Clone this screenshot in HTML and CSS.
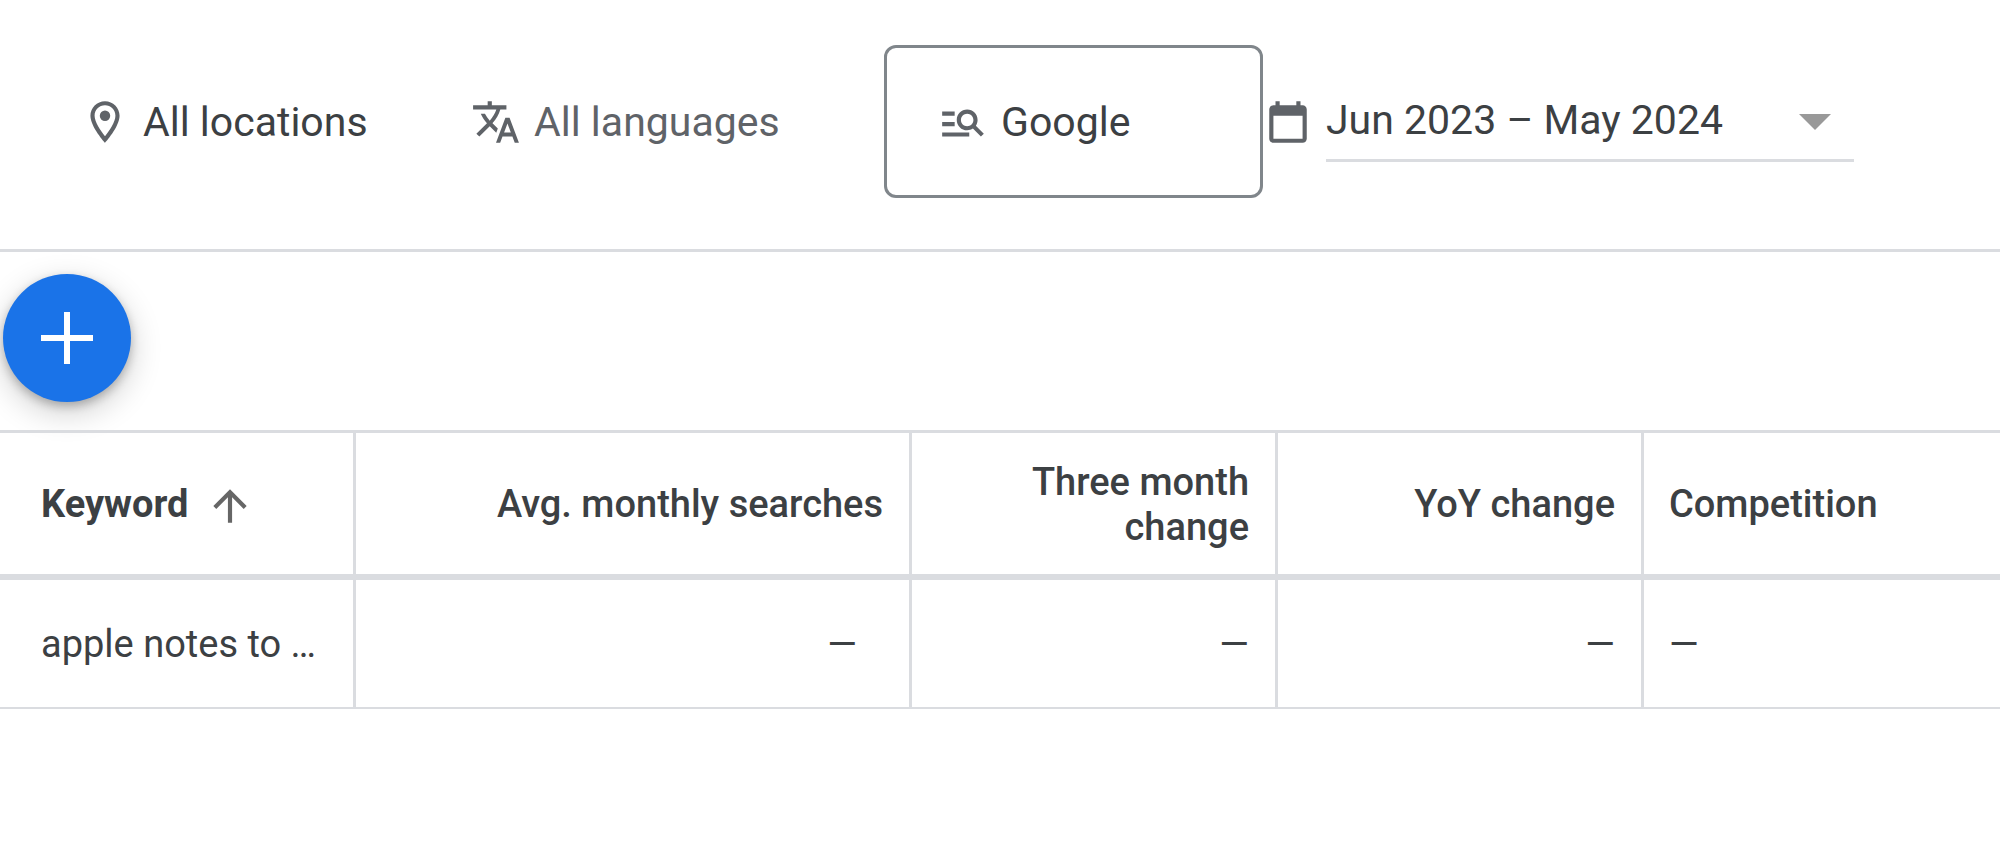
FILE: index.html
```html
<!DOCTYPE html>
<html lang="en">
<head>
    <meta charset="UTF-8">
    <meta name="viewport" content="width=device-width, initial-scale=1.0">
    <title>Keyword Planner</title>
    <link rel="stylesheet" href="styles.css">
</head>
<body>
    <header class="toolbar">
        <button class="filter locations">
            <svg class="icon" viewBox="0 0 24 24"><path d="M12 2C8.13 2 5 5.13 5 9c0 5.25 7 13 7 13s7-7.75 7-13c0-3.87-3.13-7-7-7zM7 9c0-2.76 2.24-5 5-5s5 2.24 5 5c0 2.88-2.88 7.19-5 9.88C9.92 16.21 7 11.85 7 9z"/><circle cx="12" cy="9" r="2.5"/></svg>
            <span>All locations</span>
        </button>
        <button class="filter languages">
            <svg class="icon" viewBox="0 0 24 24"><path d="M12.87 15.07l-2.54-2.51.03-.03c1.74-1.94 2.98-4.17 3.71-6.53H17V4h-7V2H8v2H1v1.99h11.17C11.5 7.92 10.44 9.75 9 11.35 8.07 10.32 7.3 9.19 6.69 8h-2c.73 1.63 1.73 3.17 2.98 4.56l-5.09 5.02L4 19l5-5 3.11 3.11.76-2.04zM18.5 10h-2L12 22h2l1.12-3h4.75L21 22h2l-4.5-12zm-2.62 7l1.62-4.33L19.12 17h-3.24z"/></svg>
            <span>All languages</span>
        </button>
        <button class="filter network">
            <svg class="icon" viewBox="0 0 24 24"><path d="M8 9H2V7h6v2zm0 3H2v2h6v-2zm12.59 7l-3.83-3.83c-.8.52-1.74.83-2.76.83-2.76 0-5-2.24-5-5s2.24-5 5-5 5 2.24 5 5c0 1.02-.31 1.96-.83 2.75L22 17.59 20.59 19zM17 11c0-1.65-1.35-3-3-3s-3 1.35-3 3 1.35 3 3 3 3-1.35 3-3zM2 19h13v-2H2v2z"/></svg>
            <span>Google</span>
        </button>
        <div class="date-range">
            <svg class="icon" viewBox="0 0 24 24"><path d="M19 4h-1V2h-2v2H8V2H6v2H5c-1.11 0-1.99.9-1.99 2L3 20c0 1.1.89 2 2 2h14c1.1 0 2-.9 2-2V6c0-1.1-.9-2-2-2zm0 16H5V9h14v11z"/></svg>
            <div class="date-field">
                <select aria-label="Date range">
                    <option>Jun 2023 – May 2024</option>
                </select>
                <svg class="caret" viewBox="0 0 32 16"><path d="M0 0h32L16 16z"/></svg>
            </div>
        </div>
    </header>

    <main>
        <div class="actions">
            <button class="add-button" aria-label="Add keywords">
                <svg viewBox="0 0 52 52"><path d="M23 0h6v23h23v6H29v23h-6V29H0v-6h23z"/></svg>
            </button>
        </div>

        <table class="keywords">
            <thead>
                <tr>
                    <th class="keyword">
                        <div class="sort">
                            <span>Keyword</span>
                            <svg class="icon" viewBox="0 0 24 24"><path d="M4 12l1.41 1.41L11 7.83V20h2V7.83l5.58 5.59L20 12l-8-8-8 8z"/></svg>
                        </div>
                    </th>
                    <th class="searches">Avg. monthly searches</th>
                    <th class="change">Three month change</th>
                    <th class="change">YoY change</th>
                    <th class="competition">Competition</th>
                </tr>
            </thead>
            <tbody>
                <tr>
                    <td class="keyword">apple notes to …</td>
                    <td class="searches">—</td>
                    <td class="change">—</td>
                    <td class="change">—</td>
                    <td class="competition">—</td>
                </tr>
            </tbody>
        </table>
    </main>
</body>
</html>
```
FILE: styles.css
```css
* {
    box-sizing: border-box;
}

body {
    font-family: Roboto, Arial, sans-serif;
    margin: 0;
    background-color: #fff;
    color: #3c4043;
}

button,
select {
    font-family: inherit;
    color: inherit;
    background: none;
    border: none;
    cursor: pointer;
}

.icon {
    width: 50px;
    height: 50px;
    flex: none;
    fill: #5f6368;
}

.toolbar {
    display: flex;
    align-items: center;
    padding: 45px 26px 51px;
    border-bottom: 3px solid #dadce0;
}

.filter {
    display: flex;
    align-items: center;
    gap: 13px;
    height: 153px;
    padding: 0 51px;
    border: 3px solid transparent;
    border-radius: 12px;
    font-size: 41px;
    white-space: nowrap;
}

.locations {
    width: 391px;
}

.languages {
    width: 467px;
    color: #5f6368;
}

.network {
    width: 379px;
    border-color: #80868b;
}

.date-range {
    display: flex;
    align-items: center;
    gap: 13px;
}

.date-field {
    position: relative;
    width: 528px;
    border-bottom: 3px solid #dadce0;
}

.date-field select {
    display: block;
    width: 100%;
    height: 78px;
    padding: 0;
    appearance: none;
    font-size: 41px;
}

.caret {
    position: absolute;
    right: 23px;
    top: 33px;
    width: 32px;
    height: 16px;
    fill: #999;
    pointer-events: none;
}

.actions {
    height: 178px;
    padding: 22px 3px;
}

.add-button {
    display: flex;
    align-items: center;
    justify-content: center;
    width: 128px;
    height: 128px;
    padding: 0;
    border-radius: 50%;
    background-color: #1a73e8;
    box-shadow: 0 4px 10px rgba(0, 0, 0, 0.24), 0 10px 32px rgba(0, 0, 0, 0.2);
}

.add-button svg {
    width: 52px;
    height: 52px;
    fill: #fff;
}

.keywords {
    width: 100%;
    table-layout: fixed;
    border-collapse: separate;
    border-spacing: 0;
    border-top: 3px solid #dadce0;
    font-size: 38px;
    line-height: 45px;
}

.keywords th,
.keywords td {
    padding: 2px 26px 0 25px;
    border-right: 3px solid #dadce0;
    text-align: right;
}

.keywords th {
    height: 147px;
    border-bottom: 6px solid #dadce0;
    font-weight: 500;
}

.keywords td {
    height: 129px;
    border-bottom: 2px solid #dadce0;
}

.keywords .keyword {
    width: 17.8%;
    padding-left: 41px;
    text-align: left;
    white-space: nowrap;
}

.keywords th.keyword {
    font-weight: 700;
}

.keywords .searches {
    width: 27.8%;
}

.keywords td.searches {
    padding-right: 52px;
}

.keywords .change {
    width: 18.3%;
}

.keywords .competition {
    border-right: none;
    text-align: left;
}

.sort {
    display: flex;
    align-items: center;
    gap: 17px;
}

.sort .icon {
    margin-top: 2px;
    fill: #666;
}
```
